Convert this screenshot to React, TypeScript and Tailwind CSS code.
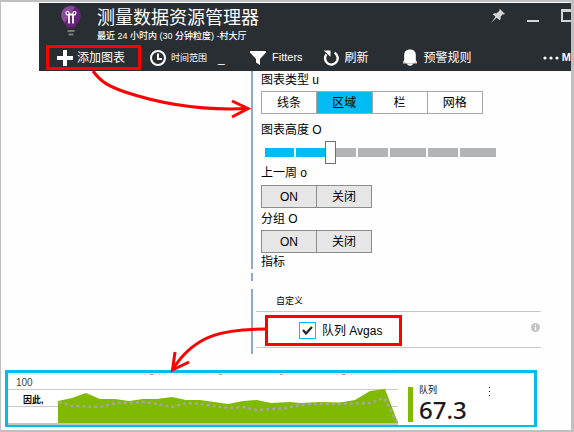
import { useState } from "react";
import type { ReactNode } from "react";

const uiFont = "font-['Liberation_Sans','Noto_Sans_CJK_SC',sans-serif]";

function BulbIcon() {
  return (
    <svg className="h-[31px] w-5" viewBox="0 0 20 31" aria-hidden="true">
      <path d="M10 0C4.2 0 .3 4.2.3 9.3c0 3.4 1.7 5.3 3.3 7.6 1 1.4 1.6 2.8 1.800 4.600h9.200c.2-1.800.8-3.200 1.800-4.600 1.600-2.300 3.300-4.200 3.300-7.600C19.700 4.200 15.800 0 10 0Z" fill="#68217a" />
      <path d="M10 0C4.200 0 .3 4.200.3 9.300c0 3.400 1.700 5.300 3.300 7.600L14 1C12.800.3 11.500 0 10 0Z" fill="#8a4b9b" />
      <path d="M8 17.500V8.500M12 17.500V8.500M5.500 8.500h9" stroke="#fff" strokeWidth="1.800" fill="none" />
      <path d="M8 8.500H6.300a1.500 1.500 0 1 1 1.700-1.500ZM12 8.500h1.700A1.500 1.500 0 1 0 12 7Z" fill="#68217a" stroke="#fff" strokeWidth="1.200" />
      <path d="M6.500 25h7M7.500 28.500h5" stroke="#7a7a7a" strokeWidth="1.800" />
    </svg>
  );
}

function PlusIcon() {
  return (
    <svg className="size-4" viewBox="0 0 16 16" aria-hidden="true">
      <path d="M8 0v16M0 8h16" stroke="#fff" strokeWidth="4" />
    </svg>
  );
}

function ClockIcon() {
  return (
    <svg className="size-4" viewBox="0 0 16 16" fill="none" stroke="#fff" strokeWidth="2" aria-hidden="true">
      <circle cx="8" cy="8" r="7" />
      <path d="M8 3.500V9h4" />
    </svg>
  );
}

function FilterIcon() {
  return (
    <svg className="h-[14px] w-4" viewBox="0 0 16 14" fill="#fff" aria-hidden="true">
      <path d="M0 0h16v1.500L10 8v6l-4-2.500V8L0 1.500Z" />
    </svg>
  );
}

function RefreshIcon() {
  return (
    <svg className="size-4" viewBox="0 0 16 16" aria-hidden="true">
      <path d="M11.500 2.800A6.300 6.300 0 1 1 3.500 4.300" fill="none" stroke="#fff" strokeWidth="2.400" />
      <path d="M.8.500h6.700v6.300Z" fill="#fff" />
    </svg>
  );
}

function BellIcon() {
  return (
    <svg className="h-[17px] w-[14px]" viewBox="0 0 14 17" fill="#fff" aria-hidden="true">
      <path d="M7 .5c3.700 0 5.800 2.200 5.800 5.500v5L14 13v1.500H0V13l1.200-2V6C1.200 2.700 3.300.5 7 .5Z" />
      <path d="M0 14h2.500M11.500 14H14" stroke="#b5653c" />
      <path d="M4 14.500h6C9.700 16 8.700 16.700 7 16.700S4.300 16 4 14.500Z" />
    </svg>
  );
}

function PinIcon() {
  return (
    <svg className="size-[14px]" viewBox="0 0 14 14" fill="#d4d5d6" aria-hidden="true">
      <path d="M9 0 14 5l-1.400.6-.9-.4-2.200 2.600c.5 1.600.2 2.700-.7 3.500L5.600 8.800 0 14l4.500-6.200-2.700-2.600c.9-.9 2.100-1.100 3.500-.7l3.200-2.700L8.200.9Z" />
    </svg>
  );
}

function InfoIcon() {
  return (
    <svg className="size-[9px]" viewBox="0 0 9 9" aria-hidden="true">
      <circle cx="4.500" cy="4.500" r="4.500" fill="#c3c3c3" />
      <path d="M4.500 1.500v1.300M4.500 3.700v3.500" stroke="#fff" strokeWidth="1.300" />
    </svg>
  );
}

function Tool({ icon, children, className = "" }: { icon: ReactNode; children: ReactNode; className?: string }) {
  return (
    <button type="button" className={`flex shrink-0 items-center whitespace-nowrap ${className}`}>
      {icon}
      {children}
    </button>
  );
}

function Header() {
  return (
    <header className="ml-[38px] mt-px h-[68px] overflow-hidden bg-[#292e33] text-white">
      <div className="flex h-[41px] items-start pl-[22px] pt-[3px]">
        <BulbIcon />
        <div className="ml-4 flex-1">
          <h1 className="text-lg leading-6">测量数据资源管理器</h1>
          <p className="text-[9px] font-medium leading-3">最近 24 小时内 (30 分钟粒度) -村大厅</p>
        </div>
        <div className="-mr-1 mt-[3px] flex">
          <button type="button" aria-label="固定"><PinIcon /></button>
          <button type="button" aria-label="最小化" className="ml-[22px] mt-[11px] h-[2px] w-3 bg-[#d4d5d6]" />
          <button type="button" aria-label="最大化" className="ml-[22px] h-[13px] w-[14px] border-2 border-t-[3px] border-[#d4d5d6]" />
        </div>
      </div>
      <nav className="flex h-[27px] items-center pl-[7px] text-xs">
        <Tool icon={<PlusIcon />} className="h-[25px] w-[95px] gap-1 border-[3px] border-[#ff0000] pl-2">添加图表</Tool>
        <Tool icon={<ClockIcon />} className="ml-[9px] gap-[5px] text-[9px]">时间范围</Tool>
        <span className="ml-[11px] w-8">_</span>
        <Tool icon={<FilterIcon />} className="gap-[6px] text-[11px]">Fitters</Tool>
        <Tool icon={<RefreshIcon />} className="ml-5 gap-[6px]">刷新</Tool>
        <Tool icon={<BellIcon />} className="ml-[34px] gap-[7px]">预警规则</Tool>
        <Tool
          icon={<svg className="h-1 w-4" viewBox="0 0 16 4" fill="#fff" aria-hidden="true"><circle cx="2" cy="2" r="1.600" /><circle cx="8" cy="2" r="1.600" /><circle cx="14" cy="2" r="1.600" /></svg>}
          className="ml-auto gap-[3px] text-[11px] font-bold"
        >
          M
        </Tool>
      </nav>
    </header>
  );
}

const chartTypes = ["线条", "区域", "栏", "网格"];

function ChartTypePicker() {
  const [active, setActive] = useState("区域");
  return (
    <div className="flex w-[222px] border border-[#a8a8a8] bg-white">
      {chartTypes.map((type) => (
        <button
          key={type}
          type="button"
          aria-pressed={type === active}
          onClick={() => setActive(type)}
          className={`h-[21px] flex-1 border-l border-[#a8a8a8] text-xs leading-5 first:border-l-0 ${type === active ? "bg-[#00bcf2]" : ""}`}
        >
          {type}
        </button>
      ))}
    </div>
  );
}

function OnOff({ label }: { label: string }) {
  return (
    <div role="group" aria-label={label} className="flex w-[111px] border border-[#8c8c8c] bg-[#e6e6e6]">
      <button type="button" className="h-[21px] flex-1 text-xs leading-5">ON</button>
      <button type="button" className="h-[21px] flex-1 border-l border-[#8c8c8c] text-xs leading-5">关闭</button>
    </div>
  );
}

function HeightSlider() {
  return (
    <div className="relative ml-1 flex h-[23px] w-[231px] items-center gap-[2px]">
      <span className="h-[9px] w-[29px] bg-[#00bcf2]" />
      <span className="h-[9px] w-[29px] bg-[#00bcf2]" />
      <span className="h-[9px] w-[29px] bg-[#b1b3b5]" />
      <span className="h-[9px] w-[30px] bg-[#b1b3b5]" />
      <span className="h-[9px] w-9 bg-[#b1b3b5]" />
      <span className="h-[9px] w-[30px] bg-[#b1b3b5]" />
      <span className="h-[9px] w-9 bg-[#b1b3b5]" />
      <input
        id="chart-height"
        type="range"
        min={0}
        max={11}
        defaultValue={3}
        className="absolute inset-0 h-[23px] w-full appearance-none bg-transparent [&::-webkit-slider-thumb]:h-[23px] [&::-webkit-slider-thumb]:w-[11px] [&::-webkit-slider-thumb]:appearance-none [&::-webkit-slider-thumb]:border [&::-webkit-slider-thumb]:border-[#707070] [&::-webkit-slider-thumb]:bg-white"
      />
    </div>
  );
}

function SettingsPanel() {
  return (
    <section className="ml-[250px] mr-[30px] text-xs text-black">
      <div className="h-[198px] border-l-2 border-[#8fa9cc] pl-2">
        <h2 className="h-5 leading-[18px]">图表类型 u</h2>
        <ChartTypePicker />
        <label htmlFor="chart-height" className="flex h-[27px] items-center pt-1">图表高度 O</label>
        <HeightSlider />
        <h2 className="h-[21px] leading-[18px]">上一周 o</h2>
        <OnOff label="上一周" />
        <h2 className="h-[22px] leading-[22px]">分组 O</h2>
        <OnOff label="分组" />
        <h2 className="h-4 leading-[18px]">指标</h2>
      </div>
      <div className="mt-1 h-2 border-l-2 border-[#8fa9cc]" />
      <div className="mt-2 h-[65px] border-l-2 border-[#8fa9cc] pl-[3px]">
        <h3 className="h-[22px] pl-5 text-[9px] leading-6">自定义</h3>
        <div className="flex h-[37px] items-end border-y border-[#c8c8c8] pb-px">
          <label className="ml-[9px] flex h-[31px] w-[137px] items-center gap-[6px] border-[3px] border-[#ff0000] pl-[31px]">
            <span className="grid size-[17px] place-items-center">
              <input type="checkbox" defaultChecked className="peer col-start-1 row-start-1 size-[17px] appearance-none border border-[#00bcf2] bg-white" />
              <svg className="pointer-events-none col-start-1 row-start-1 hidden h-[9px] w-[11px] peer-checked:block" viewBox="0 0 11 9" aria-hidden="true">
                <path d="m1 4 3 3.500L10 1" stroke="#222" strokeWidth="2.200" fill="none" />
              </svg>
            </span>
            队列 Avgas
          </label>
          <button type="button" aria-label="信息" className="ml-auto mr-px self-center pb-1"><InfoIcon /></button>
        </div>
      </div>
    </section>
  );
}

function QueueChart() {
  return (
    <section className="ml-1 mr-[34px] mt-4 flex h-[57px] border-[3px] border-b-2 border-[#00bcf2] bg-white">
      <div className="grid h-[52px] w-[390px] shrink-0">
        <svg className="col-start-1 row-start-1 h-[52px] w-[390px]" viewBox="8 373 390 52" role="img" aria-label="队列">
          <path d="M8 374.500h390" stroke="#d5eeea" strokeDasharray="2 1" />
          <path d="M150 374.500h3M219 374.500h3M280 374.500h3M342 374.500h3" stroke="#e8906a" />
          <path d="M8 389.500h390M8 406.500h390" stroke="#c8c8c8" />
          <path d="M8 424h390" stroke="#c4c4c4" strokeWidth="2" />
          <path d="M58 401 72 398 86 393 100 399 115 399 129 401 143 399 157 399 172 397 186 400 200 400 228 404 243 401 257 400 271 403 290 402 300 403 320 402 340 402.500 355 400 370 391 385 389 398 423H58Z" fill="#7fba00" />
          <path d="M59 402 72 406 100 407 115 403 143 402 158 404 172 407 186 403 200 404 228 408 243 407 257 410 286 408 300 405 312 404 340 404 370 403 384 398 397 422" fill="none" stroke="#a9a3ad" strokeWidth="2.400" strokeDasharray="3 3" />
        </svg>
        <div className="col-start-1 row-start-1 pl-2 pt-1 text-[#444]">
          <div className="text-[10px] leading-3">100</div>
          <div className="pl-[7px] pt-[3px] text-[9px] font-bold leading-4 text-black">因此,</div>
        </div>
      </div>
      <div className="ml-[10px] mt-[14px] h-[35px] w-[5px] bg-[#7fba00]" />
      <div className="ml-[6px] mt-[11px] text-black">
        <div className="text-[9px] leading-3">队列</div>
        <div className="font-['Noto_Sans','Open_Sans',sans-serif] text-2xl font-medium leading-7 text-[#1a1a1a]">67.3</div>
      </div>
      <button type="button" aria-label="更多" className="ml-auto mr-11 mt-[14px] flex h-[9px] flex-col justify-between">
        <span className="size-px bg-black" />
        <span className="size-px bg-black" />
        <span className="size-px bg-black" />
      </button>
    </section>
  );
}

export default function App() {
  return (
    <main className={`relative min-h-screen overflow-hidden border-y-2 border-l border-r-[3px] border-[#c0c0c0] bg-[#fefefe] ${uiFont}`}>
      <Header />
      <SettingsPanel />
      <QueueChart />
      <svg className="pointer-events-none absolute left-0 top-0 h-[380px] w-[280px]" viewBox="1 2 280 380" fill="none" stroke="#ff0000" strokeWidth="3" aria-hidden="true">
        <path d="M93 71C101 82 108 86 125 92 155 102 195 111 247 108.500" />
        <path d="M232 101 248 108.500 232 117" />
        <path d="M266 329C225 329 195 334 173 369" />
        <path d="M175 352 172.500 370 189 362" />
      </svg>
    </main>
  );
}
